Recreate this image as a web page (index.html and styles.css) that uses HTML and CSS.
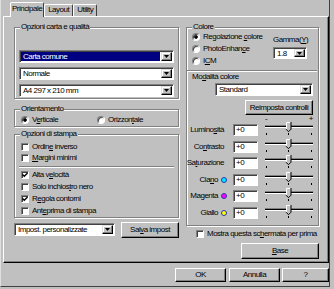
FILE: index.html
```html
<!DOCTYPE html>
<html lang="it">
<head>
    <meta charset="UTF-8">
    <meta name="viewport" content="width=device-width, initial-scale=1.0">
    <title>Proprietà stampante - Principale</title>
    <link rel="stylesheet" href="styles.css">
</head>
<body>

<div class="dialog">
    <div class="tabs">
        <div class="tab active">Principale</div>
        <div class="tab">Layout</div>
        <div class="tab">Utility</div>
    </div>

    <div class="panel">
        <!-- colonna sinistra: carta, orientamento, opzioni -->
        <div class="col-left">
            <div class="group paper">
                <div class="group-title">Opzioni carta e qualità</div>
                <div class="combo selected">
                    <span class="value">Carta comune</span>
                    <span class="drop"><svg width="5" height="3" viewBox="0 0 5 3"><path d="M0 0h5L2.5 3z"/></svg></span>
                </div>
                <div class="combo">
                    <span class="value">Normale</span>
                    <span class="drop"><svg width="5" height="3" viewBox="0 0 5 3"><path d="M0 0h5L2.5 3z"/></svg></span>
                </div>
                <div class="combo">
                    <span class="value">A4 297 x 210 mm</span>
                    <span class="drop"><svg width="5" height="3" viewBox="0 0 5 3"><path d="M0 0h5L2.5 3z"/></svg></span>
                </div>
            </div>

            <div class="group orient">
                <div class="group-title">Orientamento</div>
                <div class="radio-row">
                    <label class="radio portrait"><span class="dot checked"></span><span>V<u>e</u>rticale</span></label>
                    <label class="radio"><span class="dot"></span><span>Orizzon<u>t</u>ale</span></label>
                </div>
            </div>

            <div class="group print">
                <div class="group-title">Opzioni di stampa</div>
                <label class="check first"><span class="box"></span><span>Ordin<u>e</u> inverso</span></label>
                <label class="check"><span class="box"></span><span><u>M</u>argini minimi</span></label>
                <div class="etched"></div>
                <label class="check"><span class="box"><svg width="6" height="6" viewBox="0 0 6 6"><path d="M0.5 2.5l1.8 1.8L5.6 1" fill="none" stroke="#000" stroke-width="1.4"/></svg></span><span>Alta v<u>e</u>locità</span></label>
                <label class="check"><span class="box"></span><span>Solo inchios<u>t</u>ro nero</span></label>
                <label class="check"><span class="box"><svg width="6" height="6" viewBox="0 0 6 6"><path d="M0.5 2.5l1.8 1.8L5.6 1" fill="none" stroke="#000" stroke-width="1.4"/></svg></span><span>R<u>e</u>gola contorni</span></label>
                <label class="check"><span class="box"></span><span>Ant<u>e</u>prima di stampa</span></label>
            </div>

            <div class="custom-row">
                <div class="combo custom">
                    <span class="value">Impost. personalizzate</span>
                    <span class="drop"><svg width="5" height="3" viewBox="0 0 5 3"><path d="M0 0h5L2.5 3z"/></svg></span>
                </div>
                <button class="btn save">Sal<u>v</u>a impost</button>
            </div>
        </div>

        <!-- colonna destra: colore e regolazioni -->
        <div class="col-right">
            <div class="group color">
                <div class="group-title">Colore</div>
                <div class="color-top">
                    <div class="modes">
                        <label class="radio"><span class="dot checked"></span><span>Regolazione <u>c</u>olore</span></label>
                        <label class="radio"><span class="dot"></span><span>PhotoEnhan<u>c</u>e</span></label>
                        <label class="radio"><span class="dot"></span><span>I<u>C</u>M</span></label>
                    </div>
                    <div class="gamma">
                        <div class="gamma-label">Gamma(<u>Y</u>)</div>
                        <div class="combo gamma-combo">
                            <span class="value">1.8</span>
                            <span class="drop"><svg width="5" height="3" viewBox="0 0 5 3"><path d="M0 0h5L2.5 3z"/></svg></span>
                        </div>
                    </div>
                </div>
                <div class="etched"></div>
                <div class="mode-label">Mo<u>d</u>alità colore</div>
                <div class="combo mode">
                    <span class="value">Standard</span>
                    <span class="drop"><svg width="5" height="3" viewBox="0 0 5 3"><path d="M0 0h5L2.5 3z"/></svg></span>
                </div>
                <button class="btn reset">Reimposta controlli</button>
                <div class="scale"><span>-</span><span>+</span></div>

                <div class="adjust">
                    <div class="name"><span>Lumino<u>s</u>ità</span></div>
                    <div class="edit">+0</div>
                    <svg class="slider" width="50" height="14" viewBox="0 0 50 14"><rect x="1" y="3" width="48" height="1" fill="#808080"/><rect x="1" y="4" width="48" height="1" fill="#000"/><rect x="1" y="5" width="48" height="1" fill="#fff"/><path d="M22 0h5v7l-2.5 2.5L22 7z" fill="#c0c0c0"/><path d="M22.5 7V0.5h4" fill="none" stroke="#fff"/><path d="M27 0v7.2l-2.5 2.5L22 7.2" fill="none" stroke="#000"/><rect x="2" y="11" width="1" height="2"/><rect x="24" y="11" width="1" height="2"/><rect x="47" y="11" width="1" height="2"/></svg>
                </div>
                <div class="adjust">
                    <div class="name"><span>Co<u>n</u>trasto</span></div>
                    <div class="edit">+0</div>
                    <svg class="slider" width="50" height="14" viewBox="0 0 50 14"><rect x="1" y="3" width="48" height="1" fill="#808080"/><rect x="1" y="4" width="48" height="1" fill="#000"/><rect x="1" y="5" width="48" height="1" fill="#fff"/><path d="M22 0h5v7l-2.5 2.5L22 7z" fill="#c0c0c0"/><path d="M22.5 7V0.5h4" fill="none" stroke="#fff"/><path d="M27 0v7.2l-2.5 2.5L22 7.2" fill="none" stroke="#000"/><rect x="2" y="11" width="1" height="2"/><rect x="24" y="11" width="1" height="2"/><rect x="47" y="11" width="1" height="2"/></svg>
                </div>
                <div class="adjust">
                    <div class="name"><span>Sa<u>t</u>urazione</span></div>
                    <div class="edit">+0</div>
                    <svg class="slider" width="50" height="14" viewBox="0 0 50 14"><rect x="1" y="3" width="48" height="1" fill="#808080"/><rect x="1" y="4" width="48" height="1" fill="#000"/><rect x="1" y="5" width="48" height="1" fill="#fff"/><path d="M22 0h5v7l-2.5 2.5L22 7z" fill="#c0c0c0"/><path d="M22.5 7V0.5h4" fill="none" stroke="#fff"/><path d="M27 0v7.2l-2.5 2.5L22 7.2" fill="none" stroke="#000"/><rect x="2" y="11" width="1" height="2"/><rect x="24" y="11" width="1" height="2"/><rect x="47" y="11" width="1" height="2"/></svg>
                </div>
                <div class="adjust">
                    <div class="name ink"><span>Cia<u>n</u>o</span><span class="ink-dot cyan"></span></div>
                    <div class="edit">+0</div>
                    <svg class="slider" width="50" height="14" viewBox="0 0 50 14"><rect x="1" y="3" width="48" height="1" fill="#808080"/><rect x="1" y="4" width="48" height="1" fill="#000"/><rect x="1" y="5" width="48" height="1" fill="#fff"/><path d="M22 0h5v7l-2.5 2.5L22 7z" fill="#c0c0c0"/><path d="M22.5 7V0.5h4" fill="none" stroke="#fff"/><path d="M27 0v7.2l-2.5 2.5L22 7.2" fill="none" stroke="#000"/><rect x="2" y="11" width="1" height="2"/><rect x="24" y="11" width="1" height="2"/><rect x="47" y="11" width="1" height="2"/></svg>
                </div>
                <div class="adjust">
                    <div class="name ink"><span>Magenta</span><span class="ink-dot magenta"></span></div>
                    <div class="edit">+0</div>
                    <svg class="slider" width="50" height="14" viewBox="0 0 50 14"><rect x="1" y="3" width="48" height="1" fill="#808080"/><rect x="1" y="4" width="48" height="1" fill="#000"/><rect x="1" y="5" width="48" height="1" fill="#fff"/><path d="M22 0h5v7l-2.5 2.5L22 7z" fill="#c0c0c0"/><path d="M22.5 7V0.5h4" fill="none" stroke="#fff"/><path d="M27 0v7.2l-2.5 2.5L22 7.2" fill="none" stroke="#000"/><rect x="2" y="11" width="1" height="2"/><rect x="24" y="11" width="1" height="2"/><rect x="47" y="11" width="1" height="2"/></svg>
                </div>
                <div class="adjust">
                    <div class="name ink"><span>Giallo</span><span class="ink-dot yellow"></span></div>
                    <div class="edit">+0</div>
                    <svg class="slider" width="50" height="14" viewBox="0 0 50 14"><rect x="1" y="3" width="48" height="1" fill="#808080"/><rect x="1" y="4" width="48" height="1" fill="#000"/><rect x="1" y="5" width="48" height="1" fill="#fff"/><path d="M22 0h5v7l-2.5 2.5L22 7z" fill="#c0c0c0"/><path d="M22.5 7V0.5h4" fill="none" stroke="#fff"/><path d="M27 0v7.2l-2.5 2.5L22 7.2" fill="none" stroke="#000"/><rect x="2" y="11" width="1" height="2"/><rect x="24" y="11" width="1" height="2"/><rect x="47" y="11" width="1" height="2"/></svg>
                </div>
            </div>

            <label class="check show-first"><span class="box"></span><span>Mostra questa sc<u>h</u>ermata per prima</span></label>
            <button class="btn base"><u>B</u>ase</button>
        </div>
    </div>

    <div class="footer">
        <button class="btn ok">OK</button>
        <button class="btn cancel">Annulla</button>
        <button class="btn help">?</button>
    </div>
</div>

</body>
</html>
```

FILE: styles.css
```css
* {
    box-sizing: border-box;
}
body {
    margin: 0;
    width: 334px;
    height: 289px;
    overflow: hidden;
    background: #c0c0c0;
    color: #000;
    font-family: "Liberation Sans", Arial, sans-serif;
    font-size: 8px;
    letter-spacing: -0.5px;
    line-height: 10px;
}
u {
    text-decoration: underline;
    text-underline-offset: 1px;
}

/* finestra */
.dialog {
    width: 330px;
    height: 287px;
    border-left: 1px solid #dfdfdf;
    border-right: 1px solid #404040;
    border-bottom: 1px solid #404040;
    display: flex;
    flex-direction: column;
}
.tabs {
    display: flex;
    align-items: flex-end;
    height: 16px;
    padding-left: 9px;
    flex-shrink: 0;
}
.tab {
    height: 12px;
    padding: 0 3px;
    border: 1px solid;
    border-color: #fff #404040 transparent #fff;
    border-bottom: none;
    border-radius: 2px 2px 0 0;
    background: #c0c0c0;
    line-height: 10px;
    white-space: nowrap;
}
.tab.active {
    height: 15px;
    padding: 0 1px;
    margin-bottom: -1px;
    line-height: 12px;
    position: relative;
    z-index: 1;
}
.panel {
    width: 326px;
    height: 247px;
    margin-left: 2px;
    padding: 10px 9px 0 10px;
    border: 1px solid;
    border-color: #fff #000 #000 #fff;
    box-shadow: inset -1px -1px #808080;
    display: flex;
    gap: 7px;
    flex-shrink: 0;
}
.col-left {
    width: 165px;
    display: flex;
    flex-direction: column;
}
.col-right {
    width: 133px;
    display: flex;
    flex-direction: column;
}

/* riquadri */
.group {
    border: 1px solid #808080;
    box-shadow: inset 1px 1px #fff, 1px 1px #fff;
    display: flex;
    flex-direction: column;
}
.group-title {
    align-self: flex-start;
    height: 10px;
    margin-top: -6px;
    padding: 0 1px;
    background: #c0c0c0;
    white-space: nowrap;
}
.etched {
    height: 2px;
    border-top: 1px solid #808080;
    border-bottom: 1px solid #fff;
    flex-shrink: 0;
}

/* controlli */
.combo {
    height: 13px;
    display: flex;
    padding: 1px;
    background: #fff;
    border: 1px solid;
    border-color: #808080 #fff #fff #808080;
    box-shadow: inset 1px 1px #404040;
    flex-shrink: 0;
}
.combo .value {
    flex: 1;
    padding-left: 2px;
    margin-right: 1px;
    line-height: 9px;
    white-space: nowrap;
    overflow: hidden;
}
.combo.selected .value {
    background: #000080;
    color: #fff;
}
.drop {
    width: 11px;
    display: flex;
    align-items: center;
    justify-content: center;
    background: #c0c0c0;
    border: 1px solid;
    border-color: #dfdfdf #000 #000 #dfdfdf;
    box-shadow: inset -1px -1px #808080, inset 1px 1px #fff;
}
.drop svg {
    display: block;
}
.btn {
    padding: 0;
    font: inherit;
    letter-spacing: inherit;
    line-height: 10px;
    color: #000;
    background: #c0c0c0;
    border: 1px solid;
    border-color: #fff #000 #000 #fff;
    box-shadow: inset -1px -1px #808080;
    white-space: nowrap;
}
.radio, .check {
    display: flex;
    align-items: center;
    white-space: nowrap;
}
.dot {
    width: 8px;
    height: 8px;
    margin-right: 3px;
    border-radius: 50%;
    background: #fff;
    border: 1px solid;
    border-color: #808080 #fff #fff #808080;
    box-shadow: inset 1px 1px #404040;
    flex-shrink: 0;
}
.dot.checked {
    background: radial-gradient(circle, #000 1.4px, #fff 2.2px);
}
.box {
    width: 8px;
    height: 8px;
    margin-right: 3px;
    background: #fff;
    border: 1px solid;
    border-color: #808080 #fff #fff #808080;
    box-shadow: inset 1px 1px #404040;
    flex-shrink: 0;
}
.box svg {
    display: block;
}

/* colonna sinistra */
.paper {
    padding: 0 4px 1px;
}
.paper .group-title {
    margin-left: 1px;
}
.paper .combo {
    margin-top: 4px;
}
.paper .group-title + .combo {
    margin-top: 18px;
}
.orient {
    margin-top: 10px;
    padding: 0 4px 1px;
}
.orient .group-title {
    margin-left: 1px;
}
.radio-row {
    display: flex;
    height: 11px;
    padding-left: 2px;
}
.radio.portrait {
    width: 76px;
}
.print {
    margin-top: 7px;
    padding: 0 4px;
}
.print .group-title {
    margin-left: 1px;
}
.print .check {
    height: 11px;
    padding-left: 2px;
}
.print .check.first {
    margin-top: 2px;
}
.print .etched {
    margin: 3px 0 1px;
}
.print .etched ~ .check {
    height: 12px;
}
.custom-row {
    margin-top: 4px;
    display: flex;
    justify-content: space-between;
    align-items: flex-start;
}
.combo.custom {
    width: 101px;
    margin-top: 1px;
}
.btn.save {
    width: 58px;
    height: 16px;
}

/* colonna destra */
.color {
    padding: 0 4px 4px 5px;
}
.color-top {
    display: flex;
    height: 35px;
}
.modes {
    display: flex;
    flex-direction: column;
    margin-top: -1px;
}
.modes .radio {
    height: 12px;
}
.gamma {
    width: 34px;
    margin: 0 7px 0 auto;
    padding-top: 3px;
    display: flex;
    flex-direction: column;
}
.gamma-label {
    height: 10px;
    white-space: nowrap;
}
.combo.gamma-combo {
    height: 12px;
    margin-top: 2px;
}
.color .etched {
    margin: 3px -3px 0 -5px;
}
.mode-label {
    height: 10px;
    white-space: nowrap;
}
.combo.mode {
    width: 98px;
    align-self: flex-end;
    margin: 1px 1px 0 0;
}
.btn.reset {
    width: 68px;
    height: 15px;
    align-self: flex-end;
    margin: 4px 1px 0 0;
}
.scale {
    width: 50px;
    height: 6px;
    margin: 1px 0 0 auto;
    display: flex;
    justify-content: space-between;
    line-height: 6px;
    padding: 0 1px;
}
.adjust {
    height: 16.5px;
    margin-left: -4px;
    display: flex;
    align-items: flex-start;
}
.adjust .name {
    width: 40px;
    height: 10px;
    margin-top: 3px;
    padding-right: 4px;
    display: flex;
    justify-content: flex-end;
    align-items: center;
    white-space: nowrap;
}
.adjust .name.ink {
    padding-right: 1px;
}
.ink-dot {
    width: 6px;
    height: 6px;
    margin-left: 3px;
    border-radius: 50%;
    border: 1px solid #2838b0;
    flex-shrink: 0;
}
.ink-dot.cyan {
    background: #00e8ff;
}
.ink-dot.magenta {
    background: #ff00ff;
}
.ink-dot.yellow {
    background: #ffff00;
}
.edit {
    width: 25px;
    height: 12px;
    margin: 2px 0 0 5px;
    padding-left: 2px;
    background: #fff;
    border: 1px solid;
    border-color: #808080 #fff #fff #808080;
    box-shadow: inset 1px 1px #404040;
    line-height: 10px;
}
.slider {
    display: block;
    margin-left: 6px;
}
.show-first {
    height: 11px;
    margin-top: 2px;
    padding-left: 10px;
}
.btn.base {
    width: 78px;
    height: 16px;
    margin-top: 4px;
    align-self: flex-end;
}

/* pulsanti finali */
.footer {
    margin-top: 5px;
    display: flex;
    justify-content: flex-end;
}
.footer .btn {
    height: 14px;
}
.btn.ok {
    width: 51px;
}
.btn.cancel {
    width: 51px;
    margin-left: 3px;
}
.btn.help {
    width: 47px;
    margin-left: 2px;
}
```
